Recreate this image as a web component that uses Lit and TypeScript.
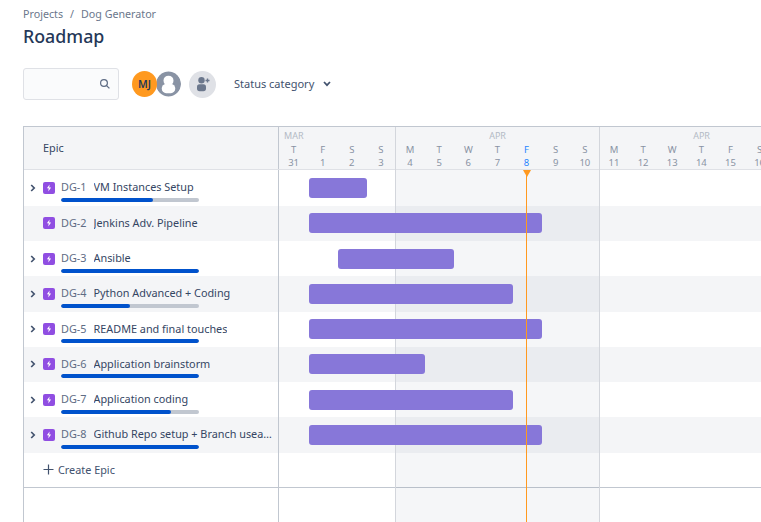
import { css, html, LitElement } from "lit";
import { customElement } from "lit/decorators.js";

const DAY = 29.14;
const TIMELINE_LEFT = 279;

interface Epic {
  key: string;
  name: string;
  start: number;
  end: number;
  progress: number | null;
  expandable: boolean;
}

const epics: Epic[] = [
  { key: "DG-1", name: "VM Instances Setup", start: 309, end: 367, progress: 67, expandable: true },
  { key: "DG-2", name: "Jenkins Adv. Pipeline", start: 309, end: 542, progress: null, expandable: false },
  { key: "DG-3", name: "Ansible", start: 338, end: 454, progress: 100, expandable: true },
  { key: "DG-4", name: "Python Advanced + Coding", start: 309, end: 513, progress: 50, expandable: true },
  { key: "DG-5", name: "README and final touches", start: 309, end: 542, progress: 100, expandable: true },
  { key: "DG-6", name: "Application brainstorm", start: 309, end: 425, progress: 100, expandable: true },
  { key: "DG-7", name: "Application coding", start: 309, end: 513, progress: 80, expandable: true },
  { key: "DG-8", name: "Github Repo setup + Branch useage", start: 309, end: 542, progress: 100, expandable: true },
];

const days = [
  ["T", "31"], ["F", "1"], ["S", "2"], ["S", "3"],
  ["M", "4"], ["T", "5"], ["W", "6"], ["T", "7"], ["F", "8"], ["S", "9"], ["S", "10"],
  ["M", "11"], ["T", "12"], ["W", "13"], ["T", "14"], ["F", "15"], ["S", "16"],
];

@customElement("app-root")
export class AppRoot extends LitElement {
  renderEpicIcon() {
    return html`<svg class="epic-icon" width="12" height="12" viewBox="0 0 12 12">
      <rect width="12" height="12" rx="2" fill="#904ee2"></rect>
      <path d="M6.6 2.6 3.9 6.3h1.8l-.4 3.1 2.8-3.9H6.2z" fill="#fff"></path>
    </svg>`;
  }

  renderRow(epic: Epic) {
    return html`
      <div class="row">
        <div class="cell">
          <span class="chevron">
            ${epic.expandable
              ? html`<svg width="8" height="8" viewBox="0 0 8 8">
                  <path d="M2.2 1 5.2 4 2.2 7" fill="none" stroke="#42526e" stroke-width="1.7"></path>
                </svg>`
              : ""}
          </span>
          ${this.renderEpicIcon()}
          <div class="summary">
            <div class="label">
              <span class="key">${epic.key}</span>
              <span class="name">${epic.name}</span>
            </div>
            ${epic.progress !== null
              ? html`<div class="progress">
                  <div class="progress-fill" style="width:${epic.progress}%"></div>
                </div>`
              : ""}
          </div>
        </div>
        <div class="track">
          <div
            class="bar"
            style="margin-left:${epic.start - TIMELINE_LEFT}px;width:${epic.end - epic.start}px"
          ></div>
        </div>
      </div>
    `;
  }

  render() {
    return html`
      <header class="page-head">
        <nav class="crumbs"><span>Projects</span><span class="slash">/</span><span>Dog Generator</span></nav>
        <h1>Roadmap</h1>
        <div class="toolbar">
          <div class="search">
            <svg width="12" height="12" viewBox="0 0 12 12">
              <circle cx="5" cy="5" r="3.4" fill="none" stroke="#5e6c84" stroke-width="1.2"></circle>
              <path d="M7.6 7.6 10.4 10.4" stroke="#5e6c84" stroke-width="1.3"></path>
            </svg>
          </div>
          <div class="avatars">
            <div class="avatar mj">MJ</div>
            <svg class="avatar ghost" width="25" height="26" viewBox="0 0 26 26">
              <circle cx="13" cy="13" r="13" fill="#8993a4"></circle>
              <circle cx="13" cy="9.5" r="5.2" fill="#fff"></circle>
              <rect x="6" y="13" width="14" height="9.5" rx="4.5" fill="#fff"></rect>
            </svg>
          </div>
          <div class="add-person">
            <svg width="16" height="16" viewBox="0 0 16 16">
              <circle cx="6.5" cy="4.2" r="3.2" fill="#6b778c"></circle>
              <rect x="2" y="8.2" width="9" height="7" rx="2.6" fill="#6b778c"></rect>
              <path d="M10.5 4.5h4M12.5 2.5v4" stroke="#6b778c" stroke-width="1.4"></path>
            </svg>
          </div>
          <div class="filter">
            <span>Status category</span>
            <svg width="8" height="6" viewBox="0 0 8 6">
              <path d="M1 1 4 4.2 7 1" fill="none" stroke="#42526e" stroke-width="1.7"></path>
            </svg>
          </div>
        </div>
      </header>

      <section class="roadmap">
        <div class="row head">
          <div class="cell epic-title">Epic</div>
          <div class="calendar">
            <div class="months">
              <span class="month first">MAR</span>
              <span class="month week">APR</span>
              <span class="month week">APR</span>
            </div>
            <div class="days">
              ${days.map(
                ([letter, num]) => html`<div class="day ${num === "8" ? "today" : ""}">
                  <span>${letter}</span><span>${num}</span>
                </div>`
              )}
            </div>
          </div>
        </div>

        ${epics.map((epic) => this.renderRow(epic))}

        <div class="row create">
          <div class="cell create-cell">
            <svg width="11" height="11" viewBox="0 0 11 11">
              <path d="M5.5 .5v10M.5 5.5h10" stroke="#42526e" stroke-width="1.2"></path>
            </svg>
            <span>Create Epic</span>
          </div>
          <div class="track"></div>
        </div>
        <div class="row tail">
          <div class="cell"></div>
          <div class="track"></div>
        </div>

        <div class="week-shade"></div>
        <div class="week-line" style="left:${TIMELINE_LEFT - 24 + DAY * 4 - 1}px"></div>
        <div class="week-line" style="left:${TIMELINE_LEFT - 24 + DAY * 11 - 1}px"></div>
        <div class="today-line"></div>
        <div class="today-mark"></div>
      </section>
    `;
  }

  static styles = css`
    :host {
      display: block;
      width: 761px;
      height: 522px;
      overflow: hidden;
      background: #fff;
      font-family: "Noto Sans", "Open Sans", sans-serif;
      color: #172b4d;
    }

    * {
      box-sizing: border-box;
    }

    .page-head {
      height: 126px;
      padding: 7px 0 0 23px;
    }

    .crumbs {
      display: flex;
      gap: 7px;
      height: 15px;
      font-size: 10.7px;
      line-height: 15px;
      color: #6b778c;
    }

    h1 {
      margin: 1px 0 0;
      font-size: 17.8px;
      line-height: 26px;
      font-weight: 500;
      color: #253858;
    }

    .toolbar {
      display: flex;
      align-items: center;
      margin-top: 19px;
    }

    .search {
      display: flex;
      align-items: center;
      justify-content: flex-end;
      width: 96px;
      height: 32px;
      padding-right: 7px;
      border: 1px solid #dfe1e6;
      border-radius: 3px;
      background: #fafbfc;
    }

    .avatars {
      display: flex;
      margin-left: 13px;
    }

    .avatar {
      width: 25px;
      height: 26px;
      border-radius: 50%;
    }

    .mj {
      display: flex;
      align-items: center;
      justify-content: center;
      background: #ff991f;
      font-size: 10.5px;
      font-weight: 600;
      color: #253858;
      position: relative;
      z-index: 1;
    }

    .ghost {
      margin-left: -1px;
    }

    .add-person {
      display: flex;
      align-items: center;
      justify-content: center;
      width: 27px;
      height: 27px;
      margin-left: 8px;
      border-radius: 50%;
      background: #dfe1e6;
    }

    .filter {
      display: flex;
      align-items: center;
      gap: 9px;
      margin-left: 18px;
      padding-bottom: 1px;
      font-size: 11px;
      color: #42526e;
    }

    .roadmap {
      position: relative;
      margin-left: 23px;
      border-top: 1px solid #c1c7d0;
      border-left: 1px solid #c1c7d0;
      height: 396px;
    }

    .row {
      display: flex;
      height: 35.25px;
    }

    .head + .row {
      height: 35.75px;
    }

    .row:nth-of-type(odd):not(.head):not(.create):not(.tail) {
      background: #f4f5f7;
    }

    .head {
      height: 43px;
      background: #f4f5f7;
      border-bottom: 1px solid #dfe1e6;
    }

    .cell {
      flex: 0 0 255px;
      display: flex;
      align-items: center;
      min-width: 0;
      border-right: 1px solid #c1c7d0;
      padding-left: 5px;
    }

    .epic-title {
      padding: 0 0 2px 19px;
      font-size: 10.85px;
      color: #344563;
    }

    .chevron {
      flex: 0 0 8px;
      display: flex;
      margin-right: 6px;
    }

    .epic-icon {
      flex: 0 0 12px;
    }

    .summary {
      position: relative;
      flex: 1;
      min-width: 0;
      margin-bottom: 2px;
      padding: 0 3px 0 6px;
    }

    .label {
      display: flex;
      gap: 7px;
      font-size: 10.85px;
      line-height: 15px;
      white-space: nowrap;
    }

    .key {
      flex: none;
      color: #5e6c84;
    }

    .name {
      overflow: hidden;
      text-overflow: ellipsis;
      color: #344563;
    }

    .progress {
      position: absolute;
      left: 6px;
      top: 18.5px;
      width: 138px;
      height: 4px;
      border-radius: 2px;
      background: #c1c7d0;
      overflow: hidden;
    }

    .progress-fill {
      height: 100%;
      border-radius: 2px;
      background: #0052cc;
    }

    .track {
      flex: 1;
      display: flex;
      align-items: center;
    }

    .bar {
      height: 20px;
      border-radius: 3px;
      background: #8777d9;
      position: relative;
      z-index: 2;
    }

    .calendar {
      flex: 1;
      display: flex;
      flex-direction: column;
      padding-top: 2px;
      color: #97a0af;
    }

    .months {
      display: flex;
      height: 14px;
      font-size: 9px;
      line-height: 13px;
      color: #b3bac5;
    }

    .month.first {
      flex: 0 0 116.56px;
      padding-left: 5px;
    }

    .month.week {
      flex: 0 0 204px;
      text-align: center;
    }

    .days {
      display: flex;
    }

    .day {
      flex: 0 0 29.14px;
      display: flex;
      flex-direction: column;
      align-items: center;
      font-size: 9.5px;
      line-height: 13px;
      color: #8993a4;
    }

    .day.today {
      color: #2684ff;
    }

    .create-cell {
      gap: 4px;
      padding-left: 19px;
      font-size: 10.85px;
      color: #42526e;
    }

    .create {
      border-bottom: 1px solid #c1c7d0;
    }

    .tail {
      height: 36px;
    }

    .week-shade {
      position: absolute;
      top: 43px;
      bottom: 0;
      left: 371.56px;
      width: 204px;
      background: rgba(9, 30, 66, 0.04);
      pointer-events: none;
    }

    .week-line {
      position: absolute;
      top: 0;
      bottom: 0;
      width: 1px;
      background: #d3d6dc;
    }

    .today-line {
      position: absolute;
      top: 43px;
      bottom: 0;
      left: 502px;
      width: 1px;
      background: #ff991f;
      z-index: 3;
    }

    .today-mark {
      position: absolute;
      top: 43px;
      left: 498.5px;
      width: 0;
      height: 0;
      border-left: 4px solid transparent;
      border-right: 4px solid transparent;
      border-top: 7px solid #ff991f;
      z-index: 3;
    }
  `;
}

declare global {
  interface HTMLElementTagNameMap {
    "app-root": AppRoot;
  }
}
